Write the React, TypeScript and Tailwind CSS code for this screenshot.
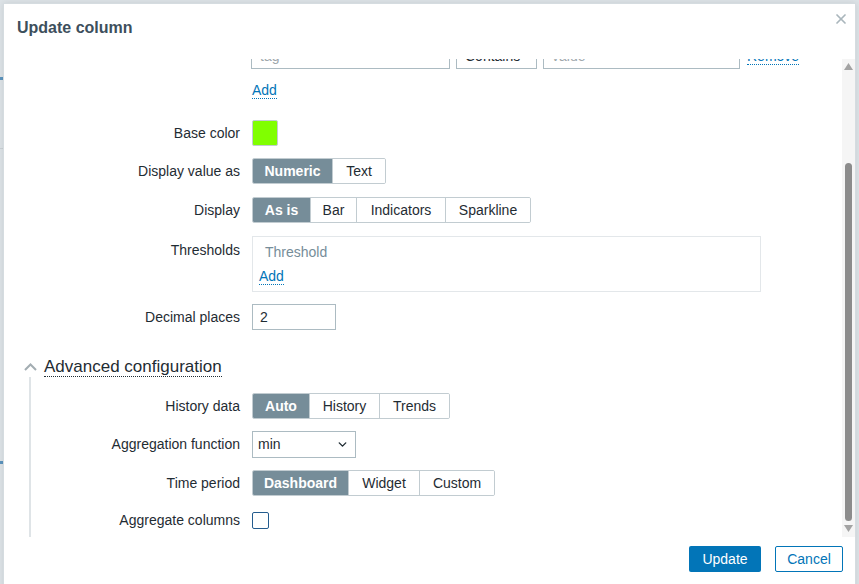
import { X, ChevronDown } from 'lucide-react'

const FONT = { fontFamily: '"Liberation Sans", Arial, sans-serif' }

type Seg = { label: string; w: number }

function Segmented({ items, active }: { items: Seg[]; active: number }) {
  return (
    <div className="flex h-[26px] rounded-[2px] border border-[#c2ccd1] overflow-hidden">
      {items.map((it, i) => (
        <div
          key={it.label}
          style={{ width: it.w }}
          className={`flex items-center justify-center text-[14px] ${
            i > 0 ? 'border-l border-[#c2ccd1]' : ''
          } ${i === active ? 'bg-[#768d99] text-white font-bold' : 'bg-white text-[#1f2c33]'}`}
        >
          {it.label}
        </div>
      ))}
    </div>
  )
}

function AddLink({ className = '' }: { className?: string }) {
  return (
    <span className={`text-[14px] text-[#0275b8] leading-[16px] border-b border-dotted border-[#0275b8] ${className}`}>
      Add
    </span>
  )
}

function Row({ label, labelW, children, className = '' }: { label: string; labelW: string; children: React.ReactNode; className?: string }) {
  return (
    <div className={`flex items-center gap-[12px] ${className}`}>
      <div className={`${labelW} shrink-0 text-right text-[14px] text-[#1f2c33]`}>{label}</div>
      {children}
    </div>
  )
}

export default function App() {
  return (
    <div style={FONT} className="relative w-[859px] h-[584px] overflow-hidden bg-[#dce2e6]">
      {/* page behind the dialog */}
      <div className="absolute left-0 top-[77px] w-[4px] h-[3px] bg-[#5b93bd]" />
      <div className="absolute left-0 top-[148px] w-[4px] h-[1px] bg-[#c9d0d4]" />
      <div className="absolute left-0 top-[461px] w-[4px] h-[3px] bg-[#5b93bd]" />

      <div className="absolute left-[4px] top-[4px] w-[851px] h-[620px] bg-white shadow-[0_0_0_1px_#d5dce0,0_0_6px_rgba(0,0,0,0.12)] flex flex-col">
        {/* header */}
        <div className="flex justify-between h-[55px] shrink-0">
          <div className="pl-[13px] pt-[14px] text-[16px] leading-[20px] font-bold text-[#3d4f5c]">Update column</div>
          <X size={16} strokeWidth={2.6} className="text-[#aab6bc] mt-[7px] mr-[6px]" />
        </div>

        {/* body */}
        <div className="flex h-[478px] shrink-0">
          <div className="flex-1 overflow-hidden">
            <div className="-mt-[16px] flex flex-col">
              <div className="flex h-[26px] items-center gap-[12px]">
                <div className="w-[235px] shrink-0" />
                <div className="flex items-center">
                  <div className="h-[26px] w-[199px] border border-[#acbbc2] px-[8px] flex items-center text-[14px] text-[#a0a8ad]">tag</div>
                  <div className="ml-[6px] h-[26px] w-[81px] border border-[#acbbc2] px-[8px] flex items-center text-[14px] text-[#1f2c33]">Contains</div>
                  <div className="ml-[6px] h-[26px] w-[197px] border border-[#acbbc2] px-[8px] flex items-center text-[14px] text-[#a0a8ad]">value</div>
                  <span className="ml-[7px] text-[14px] leading-[16px] text-[#0275b8] border-b border-dotted border-[#0275b8]">Remove</span>
                </div>
              </div>

              <div className="flex mt-[12px] h-[18px] items-center">
                <div className="w-[248px] shrink-0" />
                <AddLink />
              </div>

              <Row label="Base color" labelW="w-[236px]" className="mt-[21px]">
                <div className="h-[26px] w-[26px] rounded-[2px] border border-[#c2ccd1] bg-[#80ff00]" />
              </Row>

              <Row label="Display value as" labelW="w-[236px]" className="mt-[12px]">
                <Segmented items={[{ label: 'Numeric', w: 79 }, { label: 'Text', w: 53 }]} active={0} />
              </Row>

              <Row label="Display" labelW="w-[236px]" className="mt-[13px]">
                <Segmented
                  items={[
                    { label: 'As is', w: 57 },
                    { label: 'Bar', w: 46 },
                    { label: 'Indicators', w: 89 },
                    { label: 'Sparkline', w: 85 },
                  ]}
                  active={0}
                />
              </Row>

              <div className="flex items-start gap-[12px] mt-[13px]">
                <div className="w-[236px] shrink-0 text-right text-[14px] text-[#1f2c33] pt-[4px]">Thresholds</div>
                <div className="w-[509px] h-[56px] border border-[#e3e7ea] pl-[6px] pt-[6px] flex flex-col items-start">
                  <div className="pl-[6px] text-[14px] text-[#768d99] leading-[18px]">Threshold</div>
                  <AddLink className="mt-[7px]" />
                </div>
              </div>

              <Row label="Decimal places" labelW="w-[236px]" className="mt-[12px]">
                <div className="h-[26px] w-[84px] border border-[#acbbc2] px-[7px] flex items-center text-[14px] text-[#1f2c33]">2</div>
              </Row>

              {/* advanced configuration */}
              <div className="mt-[27px] flex items-center h-[20px] pl-[20px] gap-[7px]">
                <svg width="13" height="8" viewBox="0 0 13 8">
                  <path d="M1 7 L6.5 1.5 L12 7" fill="none" stroke="#a3adb2" strokeWidth="2" />
                </svg>
                <span className="text-[17px] leading-[19px] text-[#1f2c33] border-b border-dotted border-[#1f2c33]">Advanced configuration</span>
              </div>
              <div className="ml-[25px] border-l-2 border-[#dfe4e7] pb-[40px] flex flex-col">
                <Row label="History data" labelW="w-[209px]" className="mt-[16px]">
                  <Segmented
                    items={[
                      { label: 'Auto', w: 56 },
                      { label: 'History', w: 70 },
                      { label: 'Trends', w: 70 },
                    ]}
                    active={0}
                  />
                </Row>
                <Row label="Aggregation function" labelW="w-[209px]" className="mt-[12px]">
                  <div className="h-[27px] w-[104px] border border-[#acbbc2] pl-[5px] pr-[6px] flex items-center justify-between text-[14px] text-[#1f2c33]">
                    <span>min</span>
                    <ChevronDown size={13} strokeWidth={2.6} className="text-[#1f2c33]" />
                  </div>
                </Row>
                <Row label="Time period" labelW="w-[209px]" className="mt-[12px]">
                  <Segmented
                    items={[
                      { label: 'Dashboard', w: 95 },
                      { label: 'Widget', w: 71 },
                      { label: 'Custom', w: 75 },
                    ]}
                    active={0}
                  />
                </Row>
                <Row label="Aggregate columns" labelW="w-[209px]" className="mt-[11px] h-[26px]">
                  <div className="h-[17px] w-[17px] rounded-[2px] border-[1.5px] border-[#245c8e] bg-white" />
                </Row>
              </div>
            </div>
          </div>

          {/* scrollbar */}
          <div className="w-[13px] shrink-0 bg-[#f5f5f5] flex flex-col items-center">
            <svg width="9" height="7" viewBox="0 0 9 7" className="mt-[4px]">
              <path d="M4.5 0 L9 7 L0 7 Z" fill="#a3a3a3" />
            </svg>
            <div className="mt-[93px] h-[358px] w-[7px] rounded-full bg-[#8c8c8c]" />
            <svg width="9" height="7" viewBox="0 0 9 7" className="mt-[4px]">
              <path d="M0 0 L9 0 L4.5 7 Z" fill="#a3a3a3" />
            </svg>
          </div>
        </div>

        {/* footer */}
        <div className="flex justify-end gap-[14px] pt-[9px] pr-[12px]">
          <div className="h-[26px] w-[72px] rounded-[2px] bg-[#0275b8] text-white text-[14px] flex items-center justify-center">Update</div>
          <div className="h-[26px] w-[68px] rounded-[2px] border border-[#0275b8] bg-white text-[#0275b8] text-[14px] flex items-center justify-center">Cancel</div>
        </div>
      </div>
    </div>
  )
}
